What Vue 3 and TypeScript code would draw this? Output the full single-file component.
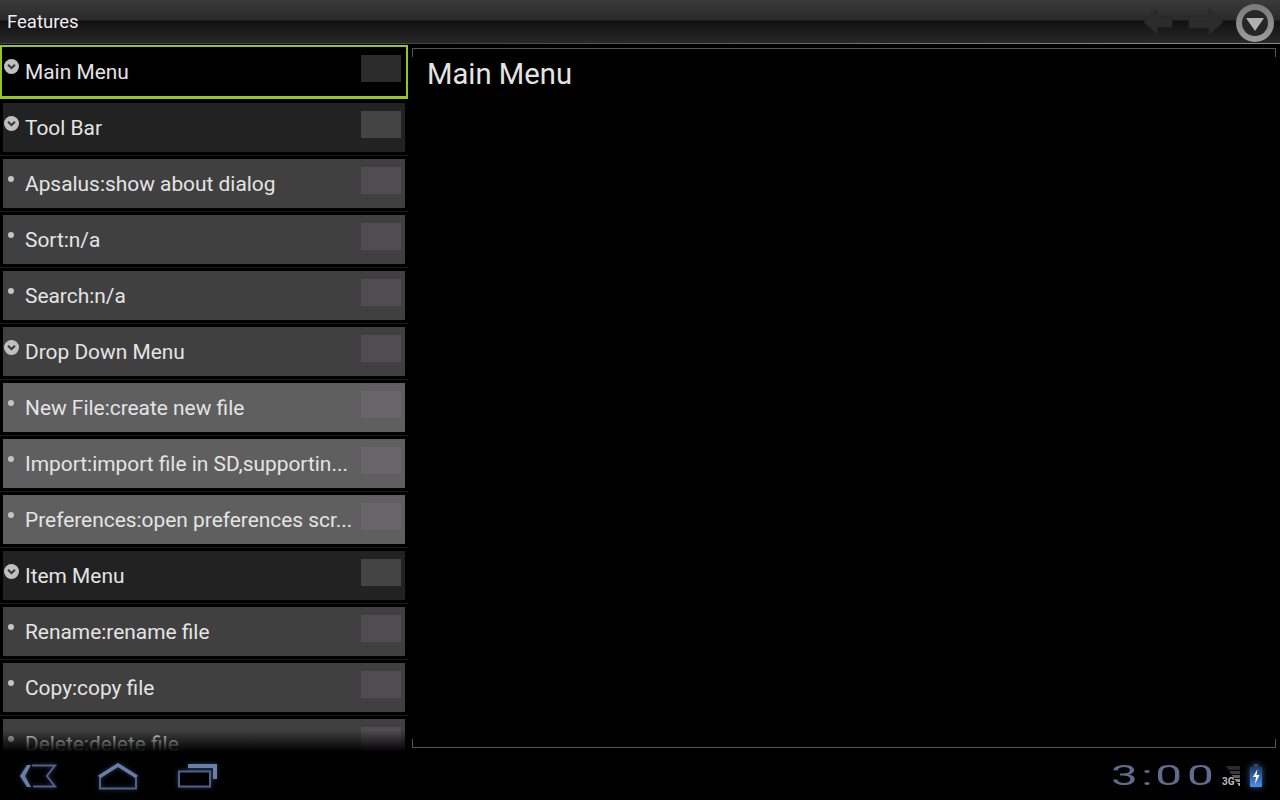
<template>
  <div class="screen">
    <!-- title bar -->
    <header class="titlebar">
      <span class="title">Features</span>
      <div class="actions">
        <svg class="arrow" width="30" height="28" viewBox="0 0 30 28">
          <path d="M1 14 14 2v7h15v10H14v7z" fill="#2c2c2c" stroke="#262626" />
        </svg>
        <svg class="arrow fwd" width="36" height="28" viewBox="0 0 36 28">
          <path d="M35 14 21 1v7H1v12h20v7z" fill="#2c2c2c" stroke="#262626" />
        </svg>
        <svg class="menu-btn" width="40" height="40" viewBox="0 0 40 40">
          <defs>
            <linearGradient id="ring" x1="0" y1="0" x2="0" y2="1">
              <stop offset="0" stop-color="#7a7a7a" />
              <stop offset="1" stop-color="#9c9c9c" />
            </linearGradient>
          </defs>
          <circle cx="20" cy="20" r="19" fill="url(#ring)" />
          <circle cx="20" cy="20" r="13" fill="#262626" />
          <path d="M11 15h18l-9 13z" fill="#b0b0b0" />
        </svg>
      </div>
    </header>

    <main class="content">
      <!-- feature list -->
      <div class="list-wrap">
        <ul class="list">
          <li v-for="item in items" :key="item.label" class="item">
            <div :class="['row', item.tone]">
              <span class="icon-slot">
                <svg v-if="item.group" class="expander" width="15" height="15" viewBox="0 0 15 15">
                  <circle cx="7.500" cy="7.500" r="7.500" fill="#c0c0c0" />
                  <path d="M4 5.800 7.500 9 11 5.800" fill="none" stroke="#3a3a3a" stroke-width="2.200" />
                </svg>
                <span v-else class="bullet"></span>
              </span>
              <span class="label">{{ item.label }}</span>
              <span class="check"></span>
            </div>
          </li>
        </ul>
        <div class="fade"></div>
      </div>

      <!-- detail pane -->
      <section class="detail">
        <h1>Main Menu</h1>
      </section>
    </main>

    <!-- system bar -->
    <footer class="sysbar">
      <div class="nav">
        <svg class="nav-icon" width="40" height="26" viewBox="0 0 40 26">
          <path d="M9 2 2 13l7 11h4L7 13l6-11z" fill="#6a7ea6" />
          <path d="M14 2.500h23L29 13l8 10.500H15" fill="none" stroke="#4f6188" stroke-width="2" />
        </svg>
        <svg class="nav-icon home" width="40" height="27" viewBox="0 0 40 27">
          <path d="M1 14 20 2l19 12" fill="none" stroke="#6a7ea6" stroke-width="3.500" />
          <path d="M2 15v10.500h36V15" fill="none" stroke="#4f6188" stroke-width="2" />
        </svg>
        <svg class="nav-icon recents" width="40" height="26" viewBox="0 0 40 26">
          <path d="M10 3h27v13" fill="none" stroke="#6a7ea6" stroke-width="4" />
          <rect x="1" y="8.500" width="31" height="15" fill="#000" stroke="#4f6188" stroke-width="2" />
        </svg>
      </div>
      <div class="status">
        <span class="clock-box"><span class="clock">3<span class="colon">:</span>00</span></span>
        <div class="signal">
          <svg width="16" height="21" viewBox="0 0 16 21">
            <path d="M1 0h14v4H3.600z" fill="#2a2a2a" />
            <path d="M4.300 5H15v3H6.200z" fill="#3c3c3c" />
            <path d="M6.900 9H15v3H8.800z" fill="#5e5e5e" />
            <path d="M9.500 13H15v3h-3.500z" fill="#8d8d8d" />
            <path d="M12.100 17H15v3h-1z" fill="#b0b0b0" />
          </svg>
          <span class="net">3G</span>
        </div>
        <svg class="battery" width="14" height="24" viewBox="0 0 14 24">
          <defs>
            <linearGradient id="charge" x1="0" y1="0" x2="0" y2="1">
              <stop offset="0" stop-color="#1d3a6a" />
              <stop offset="1" stop-color="#4c8fe8" />
            </linearGradient>
          </defs>
          <rect x="5" y="0" width="4" height="3" fill="#444" />
          <rect x="1" y="3" width="12" height="20" rx="1" fill="url(#charge)" />
          <path d="M8.500 5 4 13h3l-1 7 4.500-9H7.500z" fill="#fff" />
        </svg>
      </div>
    </footer>
  </div>
</template>

<script setup lang="ts">
interface Feature {
  label: string
  group: boolean
  tone: string
}

const items: Feature[] = [
  { label: 'Main Menu', group: true, tone: 'selected' },
  { label: 'Tool Bar', group: true, tone: 'dark' },
  { label: 'Apsalus:show about dialog', group: false, tone: 'mid' },
  { label: 'Sort:n/a', group: false, tone: 'mid' },
  { label: 'Search:n/a', group: false, tone: 'mid' },
  { label: 'Drop Down Menu', group: true, tone: 'mid' },
  { label: 'New File:create new file', group: false, tone: 'light' },
  { label: 'Import:import file in SD,supportin...', group: false, tone: 'light' },
  { label: 'Preferences:open preferences scr...', group: false, tone: 'light' },
  { label: 'Item Menu', group: true, tone: 'dark' },
  { label: 'Rename:rename file', group: false, tone: 'mid' },
  { label: 'Copy:copy file', group: false, tone: 'mid' },
  { label: 'Delete:delete file', group: false, tone: 'mid' }
]
</script>

<style>
html, body {
  margin: 0;
  background: #000;
}
</style>

<style scoped>
.screen {
  width: 1280px;
  height: 800px;
  display: flex;
  flex-direction: column;
  overflow: hidden;
  background: #000;
  color: #e4e4e4;
  font-family: Roboto, "Noto Sans", sans-serif;
}

.titlebar {
  height: 44px;
  flex: none;
  display: flex;
  align-items: center;
  justify-content: space-between;
  box-sizing: border-box;
  padding: 0 5px 0 7px;
  border-bottom: 1px solid;
  border-image: linear-gradient(90deg, #444 35%, #8a8a8a 90%) 1;
  background: linear-gradient(#3a3a3a 0, #2a2a2a 20px, #111 21px, #282828 43px);
}

.title {
  font-size: 18.500px;
  color: #eee;
}

.actions {
  display: flex;
  align-items: center;
}

.fwd {
  margin-left: 15px;
}

.menu-btn {
  margin-left: 11px;
  margin-top: 2px;
}

.content {
  flex: 1;
  min-height: 0;
  display: flex;
}

.list-wrap {
  position: relative;
  width: 408px;
  flex: none;
  overflow: hidden;
}

.list {
  list-style: none;
  margin: 0;
  padding: 0;
}

.item {
  height: 56px;
  box-sizing: border-box;
  padding: 3px;
  border-bottom: 1px solid #1c1c1c;
}

.item:first-child {
  border-bottom-color: #000;
}

.row {
  height: 49px;
  display: flex;
  align-items: flex-start;
  background-image: radial-gradient(rgba(0, 0, 0, 0.12) 0.5px, transparent 0.7px);
  background-size: 2px 2px;
}

.row.dark { background-color: #222; }
.row.mid { background-color: #404040; }
.row.light { background-color: #5f5f5f; }

.row.selected {
  box-sizing: border-box;
  height: 54px;
  margin: -2px -3px 0;
  padding-left: 1px;
  padding-right: 1px;
  border: 2px solid #97c71c;
  border-bottom-width: 3px;
  background: #000;
}

.icon-slot {
  width: 22px;
  flex: none;
  padding-top: 13px;
}

.selected .icon-slot {
  padding-top: 12px;
}

.expander {
  display: block;
  margin-left: 1px;
}

.bullet {
  display: block;
  width: 6px;
  height: 6px;
  margin: 4px 0 0 5px;
  border-radius: 50%;
  background: #c4c4c4;
}

.label {
  flex: 1;
  min-width: 0;
  font-size: 20.900px;
  line-height: 50px;
  white-space: nowrap;
}

.check {
  width: 40px;
  height: 27px;
  flex: none;
  margin: 8px 4px 0 4px;
  background: #444;
}

.selected .check {
  background: #2c2c2c;
}

.mid .check { background: #514c52; }
.light .check { background: #696669; }

.fade {
  position: absolute;
  left: 0;
  right: 0;
  bottom: 0;
  height: 22px;
  background: linear-gradient(rgba(0, 0, 0, 0), #000);
}

.detail {
  flex: 1;
  box-sizing: border-box;
  position: relative;
  margin: 4px;
  padding: 5px 15px;
  border-top: 1px solid #555;
  border-bottom: 1px solid #555;
}

.detail::before,
.detail::after {
  content: "";
  position: absolute;
  top: 0;
  bottom: 0;
  width: 1px;
  background: linear-gradient(#555 8px, transparent 8px, transparent calc(100% - 8px), #555 calc(100% - 8px));
}

.detail::before { left: 0; }
.detail::after { right: 0; }

.detail h1 {
  margin: 0;
  font-size: 29.200px;
  font-weight: 400;
  line-height: 40px;
  color: #e4e4e4;
}

.sysbar {
  height: 48px;
  flex: none;
  display: flex;
  align-items: center;
  justify-content: space-between;
  padding: 0 17px 0 18px;
  background: #000;
}

.nav {
  display: flex;
  align-items: center;
}

.nav-icon {
  filter: drop-shadow(0 0 2px rgba(90, 120, 180, 0.5));
}

.home {
  margin-left: 40px;
}

.recents {
  margin-left: 40px;
}

.status {
  display: flex;
  align-items: center;
}

.clock-box {
  width: 100px;
  flex: none;
}

.clock {
  display: inline-block;
  font-size: 28px;
  line-height: 30px;
  white-space: nowrap;
  color: #5f6c8e;
  letter-spacing: 3px;
  margin-left: -2px;
  transform: scaleX(1.7);
  transform-origin: left center;
}

.colon {
  letter-spacing: 1.500px;
  margin-left: -1px;
}

.signal {
  position: relative;
  width: 19px;
  height: 21px;
  margin-left: 9px;
  display: flex;
  justify-content: flex-end;
}

.net {
  position: absolute;
  left: 0;
  bottom: 0;
  font-size: 10px;
  line-height: 10px;
  font-weight: 700;
  color: #bbb;
}

.battery {
  margin-left: 8px;
  filter: drop-shadow(0 0 3px rgba(70, 130, 220, 0.7));
}
</style>
